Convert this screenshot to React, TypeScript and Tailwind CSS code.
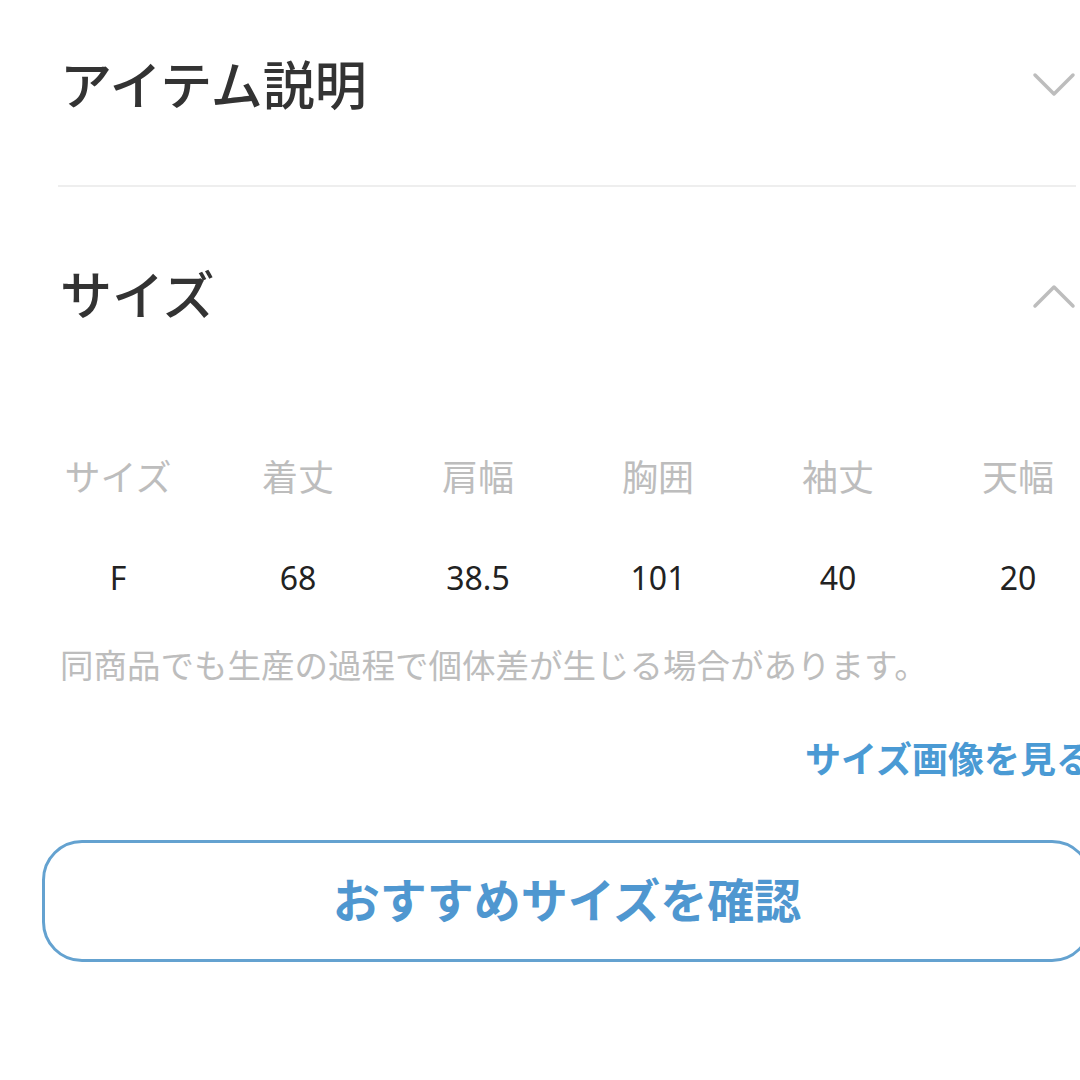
const cols = [
  { label: "サイズ", value: "F" },
  { label: "着丈", value: "68" },
  { label: "肩幅", value: "38.5" },
  { label: "胸囲", value: "101" },
  { label: "袖丈", value: "40" },
  { label: "天幅", value: "20" },
]

function Chevron({ up }: { up?: boolean }) {
  return (
    <svg width="44" height="28" viewBox="0 0 44 28" fill="none" className="shrink-0">
      <path
        d={up ? "M3 25 L22 6 L41 25" : "M3 4 L22 23 L41 4"}
        stroke="#bdbdbd"
        strokeWidth="3.5"
        strokeLinecap="round"
        strokeLinejoin="round"
      />
    </svg>
  )
}

export default function App() {
  return (
    <div
      className="w-[1080px] h-[1080px] overflow-hidden bg-white"
      style={{ fontFamily: '"Noto Sans", "Noto Sans CJK JP", sans-serif' }}
    >
      <div className="w-[1140px] pl-[58px]">
        <div className="w-[1018px] h-[187px] flex items-center justify-between border-b-2 border-[#eeeeee] pb-[16px]">
          <h2 className="pl-[2px] text-[52px] font-medium text-[#333333] leading-none">アイテム説明</h2>
          <Chevron />
        </div>
        <div className="w-[1018px] h-[216px] flex items-center justify-between">
          <h2 className="pl-[2px] text-[52px] font-medium text-[#333333] leading-none">サイズ</h2>
          <Chevron up />
        </div>
      </div>

      <div className="w-[1140px] pl-[28px]">
        <div className="grid grid-cols-[repeat(6,180px)] mt-[57px]">
          {cols.map((c) => (
            <div key={c.label} className="text-center text-[36px] text-[#bdbdbd] leading-[1]">
              {c.label}
            </div>
          ))}
        </div>
        <div className="grid grid-cols-[repeat(6,180px)] mt-[66px]">
          {cols.map((c) => (
            <div key={c.label} className="text-center text-[32px] text-[#222222] leading-[1]">
              {c.value}
            </div>
          ))}
        </div>
      </div>

      <div className="w-[1140px] pl-[60px] mt-[55px]">
        <p className="text-[33.5px] text-[#bdbdbd] leading-none whitespace-nowrap">
          同商品でも生産の過程で個体差が生じる場合があります。
        </p>
      </div>

      <div className="w-[1140px] pl-[805px] mt-[59px]">
        <p className="text-[36px] font-bold text-[#4a9ad4] leading-none whitespace-nowrap">
          サイズ画像を見る
        </p>
      </div>

      <div className="w-[1140px] pl-[42px] mt-[62px]">
        <button className="w-[1050px] h-[122px] rounded-[40px] border-[3px] border-[#64a2d0] flex items-center justify-center">
          <span className="text-[47px] font-bold text-[#4f97d0] leading-none">おすすめサイズを確認</span>
        </button>
      </div>
    </div>
  )
}
